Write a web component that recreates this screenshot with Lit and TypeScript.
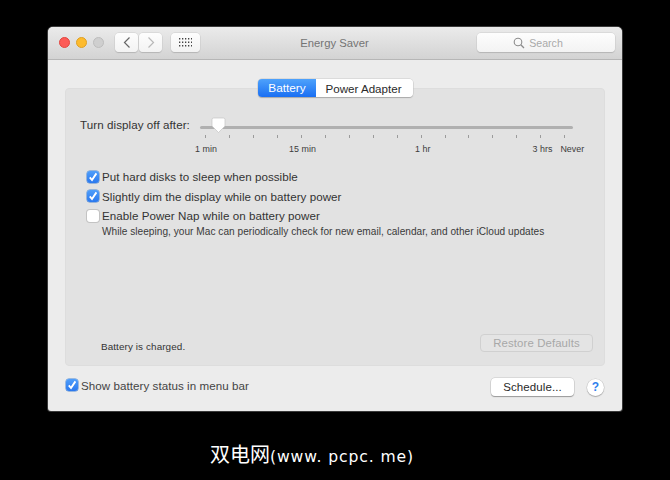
import { LitElement, html, css, svg } from "lit";
import { customElement } from "lit/decorators.js";

const check = svg`<svg class="tick" viewBox="0 0 12 12" width="12" height="12"><path d="M2.8 6.4 L5 9 L9.4 2.4" fill="none" stroke="#fff" stroke-width="1.9"/></svg>`;

@customElement("app-root")
export class AppRoot extends LitElement {
  static styles = css`
    :host { display: block; width: 670px; height: 480px; background: #000; font-family: "Liberation Sans", Arial, sans-serif; overflow: hidden; color: #333; }
    .page { display: flex; flex-direction: column; align-items: center; padding-top: 27px; height: 480px; box-sizing: border-box; }
    .win { width: 574px; height: 384px; box-sizing: border-box; background: #ececec; border-radius: 5px 5px 3px 3px; display: flex; flex-direction: column; box-shadow: 0 0 0 1px #3a3a3a; overflow: hidden; }
    .bar { height: 33px; box-sizing: border-box; flex: none; display: flex; align-items: center; padding: 0 7px 1px 11px; background: linear-gradient(#ebebeb, #d3d3d3); border-bottom: 1px solid #b6b6b6; }
    .light { width: 11px; height: 11px; border-radius: 50%; margin-right: 6px; box-sizing: border-box; }
    .red { background: #fc5b57; border: 1px solid #e2463f; }
    .yel { background: #fdbb2e; border: 1px solid #dfa023; }
    .gry { background: #cfcfcf; border: 1px solid #bdbdbd; }
    .tb { height: 19px; background: linear-gradient(#fdfdfd, #f3f3f3); border-radius: 4px; box-shadow: 0 1px 1px #b5b5b5, 0 0 0 .5px #cdcdcd; display: flex; align-items: center; justify-content: center; }
    .back { width: 23px; margin-left: 5px; }
    .fwd { width: 23px; margin-left: 1px; }
    .grid { width: 29px; margin-left: 9px; }
    .title { flex: 1; text-align: center; font-size: 11.3px; color: #747474; padding-left: 4px; padding-right: 12px; }
    .search { width: 138px; box-sizing: border-box; gap: 4px; color: #a9a9a9; font-size: 10.6px; padding-right: 16px; }
    .body { flex: 1; display: flex; flex-direction: column; padding: 19px 17px 0 17px; }
    .tabs { display: flex; align-self: center; height: 18px; border-radius: 4px; position: relative; z-index: 1; margin-bottom: -9px; box-shadow: 0 1px 1px #aaa, 0 0 0 .5px #c9c9c9; margin-left: 1px; }
    .tab { display: flex; align-items: center; justify-content: center; }
    .on { width: 58px; background: linear-gradient(#4ea2fb, #1a6ff3); color: #fff; border-radius: 4px 0 0 4px; font-size: 11.8px; }
    .off { width: 97px; background: #fff; color: #2a2a2a; border-radius: 0 4px 4px 0; font-size: 11.6px; padding-right: 2px; box-sizing: border-box; }
    .panel { height: 278px; box-sizing: border-box; flex: none; background: #e2e2e2; border: 1px solid #dddddd; border-radius: 4px; display: flex; flex-direction: column; padding: 30px 11px 13px 14px; }
    .sl { display: flex; align-items: flex-start; }
    .sl-label { font-size: 11.6px; color: #333; line-height: 14px; width: 120px; flex: none; letter-spacing: .07px; margin-top: -1px; }
    .sl-box { width: 373px; flex: none; }
    .track-row { height: 14px; display: flex; align-items: center; position: relative; margin-top: 1px; }
    .track { width: 100%; height: 3px; background: #b0b0b0; border-radius: 2px; margin-top: 1px; }
    .thumb { position: absolute; left: 11px; top: -3px; }
    .ticks { display: flex; gap: 22.96px; padding-left: 5px; margin-top: 1px; height: 4px; }
    .ticks i { display: block; width: 1px; height: 3px; background: #9b9b9b; }
    .scale { display: flex; font-size: 8.9px; color: #3c3c3c; line-height: 12px; margin: 4px 0 0 -5px; white-space: nowrap; letter-spacing: .05px; }
    .sp2 { margin-left: 72px; }
    .sp3 { margin-left: 99px; }
    .sp4 { margin-left: 102px; }
    .sp5 { margin-left: 8px; }
    .chks { display: flex; flex-direction: column; margin: 12px 0 0 7px; }
    .row { display: flex; align-items: center; font-size: 11.6px; height: 19.5px; color: #333; letter-spacing: .05px; }
    .cb { width: 12px; height: 12px; box-sizing: border-box; border-radius: 3px; margin-right: 3px; display: flex; flex: none; }
    .cb.y { background: linear-gradient(#4f9efa, #2a78ee); box-shadow: 0 0 0 .5px #4a85d0; }
    .cb.n { background: #fff; box-shadow: 0 0 0 1px #c3c3c3; }
    .sub { font-size: 10.1px; margin-left: 15px; line-height: 12px; margin-top: 0; color: #3a3a3a; letter-spacing: .03px; }
    .end { margin-top: auto; display: flex; align-items: center; justify-content: space-between; padding-left: 21px; }
    .charged { font-size: 9.9px; color: #333; letter-spacing: .1px; padding-top: 7px; }
    .restore { width: 113px; height: 18px; box-sizing: border-box; border: 1px solid #d0d0d0; border-radius: 4px; background: #e4e4e4; color: #a8a8a8; font-size: 11.4px; display: flex; align-items: center; justify-content: center; letter-spacing: .1px; }
    .foot { display: flex; align-items: center; height: 18px; margin-top: 12px; padding-left: 1px; }
    .foot .row { height: auto; flex: 1; font-size: 11.6px; color: #444; margin-bottom: 4px; }
    .sched { width: 83px; height: 18px; background: #fff; border-radius: 4px; box-shadow: 0 1px 1px #999, 0 0 0 .5px #c5c5c5; font-size: 11.5px; display: flex; align-items: center; justify-content: center; color: #2a2a2a; margin-right: 13px; letter-spacing: .1px; }
    .help { width: 17px; height: 17px; border-radius: 50%; background: #fff; box-shadow: 0 1px 1px #aaa, 0 0 0 .5px #c5c5c5; color: #2f80ed; font-size: 12px; font-weight: bold; display: flex; align-items: center; justify-content: center; margin-right: 1px; }
    .mark { color: #fff; font-family: "Noto Sans CJK SC", sans-serif; font-size: 20px; margin-top: 30px; line-height: 26px; white-space: nowrap; margin-right: 46px; }
    .latin { font-family: "DejaVu Sans", sans-serif; font-size: 15.6px; letter-spacing: .9px; }
  `;

  render() {
    const ticks = Array.from({ length: 16 }, () => html`<i></i>`);
    return html`<div class="page">
      <div class="win">
        <div class="bar">
          <span class="light red"></span><span class="light yel"></span><span class="light gry"></span>
          <div class="tb back"><svg width="10" height="13" viewBox="0 0 10 13"><path d="M7.5 1.5 L2.5 6.5 L7.5 11.5" fill="none" stroke="#666" stroke-width="1.2"/></svg></div>
          <div class="tb fwd"><svg width="10" height="13" viewBox="0 0 10 13"><path d="M2.5 1.5 L7.5 6.5 L2.5 11.5" fill="none" stroke="#b9b9b9" stroke-width="1.2"/></svg></div>
          <div class="tb grid"><svg width="13" height="9" viewBox="0 0 13 9" fill="#444">
            ${[0, 3.5, 7].map((y) => [0, 3, 6, 9, 12].map((x) => svg`<rect x=${x} y=${y} width="1.3" height="1.5"/>`))}
          </svg></div>
          <div class="title">Energy Saver</div>
          <div class="tb search"><svg width="12" height="12" viewBox="0 0 12 12"><circle cx="5" cy="5" r="3.8" fill="none" stroke="#8c8c8c" stroke-width="1.1"/><path d="M7.8 7.8 L11 11" stroke="#8c8c8c" stroke-width="1.3"/></svg><span>Search</span></div>
        </div>
        <div class="body">
          <div class="tabs"><div class="tab on">Battery</div><div class="tab off">Power Adapter</div></div>
          <div class="panel">
            <div class="sl">
              <div class="sl-label">Turn display off after:</div>
              <div class="sl-box">
                <div class="track-row"><div class="track"></div>
                  <svg class="thumb" width="15" height="17" viewBox="0 0 15 17"><path d="M2.5 1 H12.5 Q14 1 14 2.5 V9 L7.5 15.5 L1 9 V2.5 Q1 1 2.5 1Z" fill="#fff" stroke="#c4c4c4" stroke-width=".7"/></svg>
                </div>
                <div class="ticks">${ticks}</div>
                <div class="scale"><span>1 min</span><span class="sp2">15 min</span><span class="sp3">1 hr</span><span class="sp4">3 hrs</span><span class="sp5">Never</span></div>
              </div>
            </div>
            <div class="chks">
              <div class="row"><span class="cb y">${check}</span>Put hard disks to sleep when possible</div>
              <div class="row"><span class="cb y">${check}</span>Slightly dim the display while on battery power</div>
              <div class="row"><span class="cb n"></span>Enable Power Nap while on battery power</div>
              <div class="sub">While sleeping, your Mac can periodically check for new email, calendar, and other iCloud updates</div>
            </div>
            <div class="end"><div class="charged">Battery is charged.</div><div class="restore">Restore Defaults</div></div>
          </div>
          <div class="foot">
            <div class="row"><span class="cb y">${check}</span>Show battery status in menu bar</div>
            <div class="sched">Schedule...</div>
            <div class="help">?</div>
          </div>
        </div>
      </div>
      <div class="mark">双电网<span class="latin">(www. pcpc. me)</span></div>
    </div>`;
  }
}
